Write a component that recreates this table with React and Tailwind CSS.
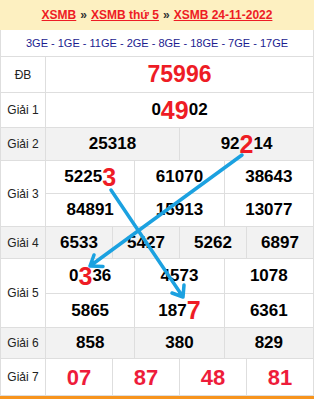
import React from "react";

const cellB = "border-r border-[#dedede] last:border-r-0";

const Big = ({ children }) => (
  <span className="text-[25px] leading-none text-[#ee1c25]">{children}</span>
);

const Num = ({ children, red }) => (
  <div
    className={`flex-1 flex items-center justify-center font-bold ${cellB} ${
      red ? "text-[22px] text-[#ee1c3a]" : "text-[17px] text-black"
    }`}
  >
    {children}
  </div>
);

const Row = ({ label, h, gray, children }) => (
  <div
    className={`flex border-b border-[#dedede] ${gray ? "bg-[#f2f2f2]" : "bg-white"} ${h}`}
  >
    <div className="w-[45px] shrink-0 flex items-center justify-center border-r border-[#dedede] text-[12px] text-[#222]">
      {label}
    </div>
    <div className="flex-1 flex flex-col">{children}</div>
  </div>
);

const Arrows = () => (
  <svg
    className="absolute inset-0 pointer-events-none"
    width="314"
    height="399"
    viewBox="0 0 314 399"
  >
    <g
      stroke="#1ba1e0"
      strokeWidth="3.5"
      strokeLinecap="round"
      strokeLinejoin="round"
      fill="none"
    >
      <path d="M242 155 L90 266 M103 266.5 L90 266 L94 255" />
      <path d="M111 190 L183 297 M184 285 L183 297 L172 293" />
    </g>
  </svg>
);

export default function App() {
  return (
    <div
      className="relative w-[314px] h-[399px] overflow-hidden bg-white"
      style={{ fontFamily: '"Liberation Sans", Arial, sans-serif' }}
    >
      <div className="h-[30px] bg-[#fdf0c1] flex items-center justify-center text-[12px] font-bold">
        <a className="text-[#ee1c25] underline">XSMB</a>
        <span className="mx-[4px] text-[#333]">»</span>
        <a className="text-[#ee1c25] underline">XSMB thứ 5</a>
        <span className="mx-[4px] text-[#333]">»</span>
        <a className="text-[#ee1c25] underline">XSMB 24-11-2022</a>
      </div>
      <div className="border-l border-r border-[#dedede]">
        <div className="h-[27px] flex items-center justify-center border-b border-[#dedede] text-[11px] text-[#1b1b8f]">
          3GE - 1GE - 11GE - 2GE - 8GE - 18GE - 7GE - 17GE
        </div>

        <Row label="ĐB" h="h-[36px]">
          <div className="flex-1 flex items-center justify-center text-[23px] font-bold text-[#ee1c25]">
            75996
          </div>
        </Row>

        <Row label="Giải 1" h="h-[35px]">
          <Num>
            0<Big>49</Big>02
          </Num>
        </Row>

        <Row label="Giải 2" h="h-[33px]" gray>
          <div className="flex-1 flex">
            <Num>25318</Num>
            <Num>
              92<Big>2</Big>14
            </Num>
          </div>
        </Row>

        <Row label="Giải 3" h="h-[66px]">
          <div className="flex-1 flex border-b border-[#dedede]">
            <Num>
              5225<Big>3</Big>
            </Num>
            <Num>61070</Num>
            <Num>38643</Num>
          </div>
          <div className="flex-1 flex">
            <Num>84891</Num>
            <Num>15913</Num>
            <Num>13077</Num>
          </div>
        </Row>

        <Row label="Giải 4" h="h-[32px]" gray>
          <div className="flex-1 flex">
            <Num>6533</Num>
            <Num>5427</Num>
            <Num>5262</Num>
            <Num>6897</Num>
          </div>
        </Row>

        <Row label="Giải 5" h="h-[69px]">
          <div className="h-[35px] flex border-b border-[#dedede]">
            <Num>
              0<Big>3</Big>36
            </Num>
            <Num>4573</Num>
            <Num>1078</Num>
          </div>
          <div className="flex-1 flex">
            <Num>5865</Num>
            <Num>
              187<Big>7</Big>
            </Num>
            <Num>6361</Num>
          </div>
        </Row>

        <Row label="Giải 6" h="h-[31px]" gray>
          <div className="flex-1 flex">
            <Num>858</Num>
            <Num>380</Num>
            <Num>829</Num>
          </div>
        </Row>

        <Row label="Giải 7" h="h-[37px]">
          <div className="flex-1 flex">
            <Num red>07</Num>
            <Num red>87</Num>
            <Num red>48</Num>
            <Num red>81</Num>
          </div>
        </Row>
      </div>
      <div className="h-[3px] bg-[#f7941d]" />
      <Arrows />
    </div>
  );
}
